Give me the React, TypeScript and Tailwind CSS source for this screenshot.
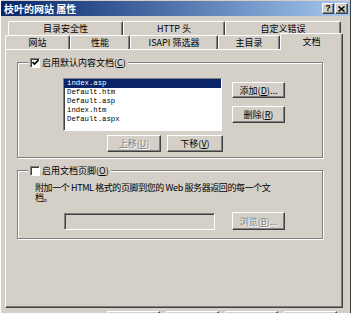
import React from "react";

const raised =
  "border border-t-white border-l-white border-r-[#404040] border-b-[#404040] shadow-[inset_-1px_-1px_#808080]";
const sunken =
  "border border-t-[#808080] border-l-[#808080] border-r-white border-b-white shadow-[inset_1px_1px_#404040]";

const files = ["index.asp", "Default.htm", "Default.asp", "index.htm", "Default.aspx"];

function Label({ text, k, tail }: { text: string; k: string; tail?: string }) {
  return (
    <span>
      {text}(<span className="underline">{k}</span>){tail}
    </span>
  );
}

function Btn({
  children,
  disabled,
  className,
}: {
  children?: React.ReactNode;
  disabled?: boolean;
  className?: string;
}) {
  return (
    <div
      className={`${raised} ${className ?? ""} shrink-0 flex items-center justify-center text-[9px] leading-none bg-[#d4d0c8] ${
        disabled ? "text-[#808080] [text-shadow:1px_1px_#ffffff]" : "text-black"
      }`}
    >
      {children}
    </div>
  );
}

function CheckBox({ checked }: { checked?: boolean }) {
  return (
    <div className={`${sunken} w-[10px] h-[10px] bg-white flex items-center justify-center`}>
      {checked && (
        <svg width="7" height="7" viewBox="0 0 7 7">
          <polyline points="0.5,3 2.5,5 6.5,1" fill="none" stroke="black" strokeWidth="1.6" />
        </svg>
      )}
    </div>
  );
}

function Tab({ label, w }: { label: string; w: string }) {
  return (
    <div
      className={`${w} h-full border-t border-l border-r border-t-white border-l-white border-r-[#404040] shadow-[inset_-1px_0_#808080] rounded-t-[2px] flex items-center justify-center text-[9px] leading-none`}
    >
      {label}
    </div>
  );
}

export default function App() {
  return (
    <div className="relative w-[351px] h-[313px] overflow-hidden bg-[#d4d0c8] flex flex-col font-['Noto_Sans_CJK_SC',sans-serif] text-black shadow-[inset_1px_0_#ffffff,inset_-1px_0_#404040]">
      {/* title bar */}
      <div className="shrink-0 mt-[1px] mx-[1px] h-[15px] bg-gradient-to-r from-[#0a246a] to-[#a6caf0] flex items-center pl-[3px] pr-[2px]">
        <span className="text-white font-bold text-[10px] leading-none">枝叶的网站 属性</span>
        <div className="ml-auto flex gap-[1px]">
          <div className={`${raised} w-[12px] h-[11px] bg-[#d4d0c8] flex items-center justify-center text-[9px] font-bold leading-none font-['Liberation_Sans',sans-serif]`}>
            ?
          </div>
          <div className={`${raised} w-[13px] h-[11px] bg-[#d4d0c8] flex items-center justify-center`}>
            <svg width="7" height="6" viewBox="0 0 7 6">
              <path d="M0.5 0.5 L6.5 5.5 M6.5 0.5 L0.5 5.5" stroke="black" strokeWidth="1.5" />
            </svg>
          </div>
        </div>
      </div>

      {/* tab rows */}
      <div className="shrink-0 mt-[5px] h-[14px] flex pl-[8px]">
        <Tab label="目录安全性" w="w-[115px]" />
        <Tab label="HTTP 头" w="w-[102px]" />
        <Tab label="自定义错误" w="w-[116px]" />
      </div>
      <div className="shrink-0 h-[14px] flex items-end pl-[5px] relative z-10">
        <Tab label="网站" w="w-[65px]" />
        <Tab label="性能" w="w-[60px]" />
        <Tab label="ISAPI 筛选器" w="w-[88px]" />
        <Tab label="主目录" w="w-[62px]" />
        <div className="w-[63px] h-[17px] -mb-[1px] bg-[#d4d0c8] border-t border-l border-r border-t-white border-l-white border-r-[#404040] shadow-[inset_-1px_0_#808080] rounded-t-[2px] flex justify-center pt-[3px] text-[9px] leading-none">
          文档
        </div>
      </div>

      {/* panel */}
      <div className={`${raised} shrink-0 ml-[5px] w-[338px] h-[259px] pt-[12px] pl-[11px] flex flex-col`}>
        {/* group 1 */}
        <div className="relative shrink-0 w-[306px] h-[96px] border border-[#808080] shadow-[inset_1px_1px_#ffffff,1px_1px_#ffffff] flex flex-col">
          <div className="absolute -top-[6px] left-[10px] h-[11px] px-[2px] bg-[#d4d0c8] flex items-center gap-[2px] text-[9px] leading-none">
            <CheckBox checked />
            <Label text="启用默认内容文档" k="C" />
          </div>
          <div className="flex mt-[15px] ml-[45px]">
            <div className={`${sunken} w-[159px] h-[53px] bg-white flex flex-col font-['Liberation_Mono',monospace] text-[7.3px]`}>
              {files.map((f, i) => (
                <div
                  key={f}
                  className={`h-[9px] leading-[9px] pl-[3px] ${i === 0 ? "bg-[#0a246a] text-white" : ""}`}
                >
                  {f}
                </div>
              ))}
            </div>
            <div className="ml-[10px] mt-[4px] flex flex-col">
              <Btn className="w-[53px] h-[16px]">
                <Label text="添加" k="D" tail="..." />
              </Btn>
              <Btn className="w-[53px] h-[17px] mt-[8px]">
                <Label text="删除" k="R" />
              </Btn>
            </div>
          </div>
          <div className="flex mt-[4px] ml-[89px]">
            <Btn disabled className="w-[54px] h-[17px]">
              <Label text="上移" k="U" />
            </Btn>
            <Btn className="w-[56px] h-[17px] ml-[6px]">
              <Label text="下移" k="V" />
            </Btn>
          </div>
        </div>

        {/* group 2 */}
        <div className="relative shrink-0 mt-[12px] w-[306px] h-[69px] border border-[#808080] shadow-[inset_1px_1px_#ffffff,1px_1px_#ffffff] flex flex-col">
          <div className="absolute -top-[6px] left-[10px] h-[11px] px-[2px] bg-[#d4d0c8] flex items-center gap-[2px] text-[9px] leading-none">
            <CheckBox />
            <Label text="启用文档页脚" k="O" />
          </div>
          <div className="mt-[12px] ml-[17px] text-[9px] tracking-[-0.4px] whitespace-nowrap flex flex-col">
            <div className="h-[10px] leading-[10px]">附加一个 HTML 格式的页脚到您的 Web 服务器返回的每一个文</div>
            <div className="h-[10px] leading-[10px]">档。</div>
          </div>
          <div className="flex items-center mt-[9px] ml-[46px]">
            <div className={`${sunken} w-[151px] h-[17px] bg-[#d4d0c8]`} />
            <Btn disabled className="w-[53px] h-[18px] ml-[17px]">
              <Label text="浏览" k="B" tail="..." />
            </Btn>
          </div>
        </div>
      </div>

      {/* dialog buttons, only their top edges show */}
      <div className="shrink-0 mt-[3px] flex pl-[107px] gap-[6px]">
        <Btn className="w-[53px] h-[18px]" />
        <Btn className="w-[53px] h-[18px]" />
        <Btn className="w-[53px] h-[18px]" />
        <Btn className="w-[53px] h-[18px]" />
      </div>
    </div>
  );
}
